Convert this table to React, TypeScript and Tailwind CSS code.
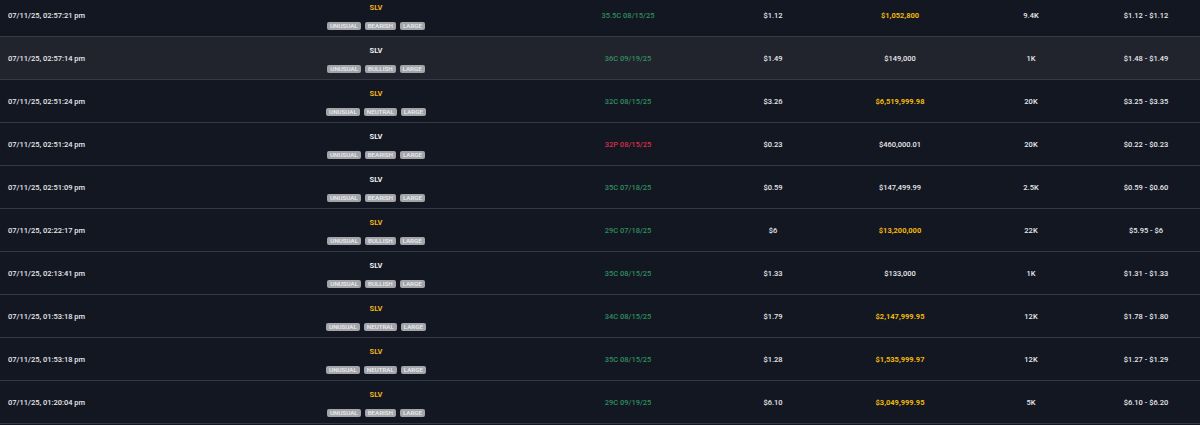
import React from 'react'

type Flow = {
  time: string
  sentiment: 'BEARISH' | 'BULLISH' | 'NEUTRAL'
  contract: string
  side: 'C' | 'P'
  price: string
  value: string
  big: boolean
  size: string
  range: string
}

const flows: Flow[] = [
  { time: '07/11/25, 02:57:21 pm', sentiment: 'BEARISH', contract: '35.5C 08/15/25', side: 'C', price: '$1.12', value: '$1,052,800', big: true, size: '9.4K', range: '$1.12 - $1.12' },
  { time: '07/11/25, 02:57:14 pm', sentiment: 'BULLISH', contract: '36C 09/19/25', side: 'C', price: '$1.49', value: '$149,000', big: false, size: '1K', range: '$1.48 - $1.49' },
  { time: '07/11/25, 02:51:24 pm', sentiment: 'NEUTRAL', contract: '32C 08/15/25', side: 'C', price: '$3.26', value: '$6,519,999.98', big: true, size: '20K', range: '$3.25 - $3.35' },
  { time: '07/11/25, 02:51:24 pm', sentiment: 'BEARISH', contract: '32P 08/15/25', side: 'P', price: '$0.23', value: '$460,000.01', big: false, size: '20K', range: '$0.22 - $0.23' },
  { time: '07/11/25, 02:51:09 pm', sentiment: 'BEARISH', contract: '35C 07/18/25', side: 'C', price: '$0.59', value: '$147,499.99', big: false, size: '2.5K', range: '$0.59 - $0.60' },
  { time: '07/11/25, 02:22:17 pm', sentiment: 'BULLISH', contract: '29C 07/18/25', side: 'C', price: '$6', value: '$13,200,000', big: true, size: '22K', range: '$5.95 - $6' },
  { time: '07/11/25, 02:13:41 pm', sentiment: 'BULLISH', contract: '35C 08/15/25', side: 'C', price: '$1.33', value: '$133,000', big: false, size: '1K', range: '$1.31 - $1.33' },
  { time: '07/11/25, 01:53:18 pm', sentiment: 'NEUTRAL', contract: '34C 08/15/25', side: 'C', price: '$1.79', value: '$2,147,999.95', big: true, size: '12K', range: '$1.78 - $1.80' },
  { time: '07/11/25, 01:53:18 pm', sentiment: 'NEUTRAL', contract: '35C 08/15/25', side: 'C', price: '$1.28', value: '$1,535,999.97', big: true, size: '12K', range: '$1.27 - $1.29' },
  { time: '07/11/25, 01:20:04 pm', sentiment: 'BEARISH', contract: '29C 09/19/25', side: 'C', price: '$6.10', value: '$3,049,999.95', big: true, size: '5K', range: '$6.10 - $6.20' },
]

function Tag({ label }: { label: string }) {
  return (
    <span className="h-[8px] px-[3px] rounded-[2px] bg-[#a3a5aa] text-[#eceef1] text-[6.2px] leading-[8px] font-medium">
      {label}
    </span>
  )
}

export default function App() {
  return (
    <div
      className="w-[1200px] h-[425px] overflow-hidden bg-[#131722] text-[#e8e9ec] font-medium"
      style={{ fontFamily: 'Roboto, "Liberation Sans", sans-serif' }}
    >
      <div className="-mt-[6px]">
        {flows.map((f, i) => (
          <div
            key={i}
            className={`grid grid-cols-[212px_328px_176px_114px_140px_122px_108px] items-center h-[43px] border-b border-[#363943] text-[7.5px] ${
              i === 1 ? 'bg-[#22242d]' : ''
            }`}
          >
            <div className="pl-[8px] pt-[1px]">{f.time}</div>
            <div className="flex flex-col items-center gap-[9px] pt-[2px]">
              <span className={`leading-[10px] font-bold ${f.big ? 'text-[#f0b41c]' : 'text-[#eeeff2]'}`}>SLV</span>
              <div className="flex gap-[4px]">
                <Tag label="UNUSUAL" />
                <Tag label={f.sentiment} />
                <Tag label="LARGE" />
              </div>
            </div>
            <div className={`text-center pt-[1px] ${f.side === 'C' ? 'text-[#2f8f5c]' : 'text-[#d92f45]'}`}>{f.contract}</div>
            <div className="text-center pt-[1px]">{f.price}</div>
            <div className={`text-center pt-[1px] ${f.big ? 'text-[#f0b90b] font-bold' : ''}`}>{f.value}</div>
            <div className="text-center pt-[1px]">{f.size}</div>
            <div className="text-center pt-[1px]">{f.range}</div>
          </div>
        ))}
      </div>
    </div>
  )
}
